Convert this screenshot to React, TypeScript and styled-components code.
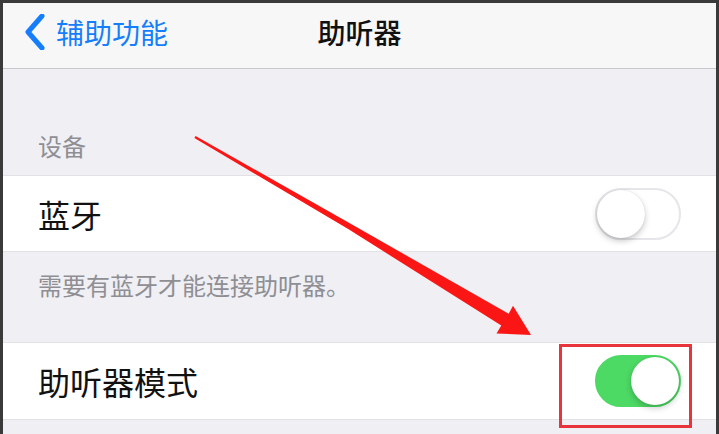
import React from "react";
import styled, { createGlobalStyle } from "styled-components";

const GlobalStyle = createGlobalStyle`
  html, body {
    margin: 0;
    padding: 0;
    background: #3a3a3a;
  }
  body {
    font-family: "Noto Sans CJK SC", "Noto Sans", sans-serif;
  }
`;

const Page = styled.div`
  position: relative;
  width: 719px;
  height: 434px;
  overflow: hidden;
  background: #3a3a3a;
`;

const Screen = styled.div`
  margin: 3px 3px 0 3px;
  height: 431px;
  background: #efeff4;
  display: flex;
  flex-direction: column;
`;

const NavBar = styled.div`
  box-sizing: border-box;
  height: 66px;
  padding-bottom: 8px;
  background: #f7f7f8;
  border-bottom: 1px solid #c8c7cc;
  display: grid;
  grid-template-columns: 1fr auto 1fr;
  align-items: center;
`;

const BackButton = styled.div`
  display: flex;
  align-items: center;
  gap: 10px;
  padding-left: 21px;
  color: #157efb;
  font-size: 28px;
  line-height: 36px;
`;

const Title = styled.div`
  font-size: 28px;
  line-height: 36px;
  font-weight: 500;
  color: #111;
`;

const SectionHeader = styled.div`
  padding: 65px 0 17px 35px;
  font-size: 24px;
  line-height: 24px;
  color: #8e8e93;
`;

const SectionFooter = styled.div`
  padding: 21px 0 45px 35px;
  font-size: 24px;
  line-height: 24px;
  color: #8e8e93;
`;

const Row = styled.div<{ $h: number }>`
  box-sizing: border-box;
  height: ${(p) => p.$h}px;
  background: #fff;
  border-top: 1px solid #e2e2e6;
  border-bottom: 1px solid #e2e2e6;
  display: flex;
  align-items: center;
  justify-content: space-between;
  padding: 0 35px;
`;

const Label = styled.span`
  font-size: 32px;
  line-height: 40px;
  color: #111;
`;

const Track = styled.div<{ $on: boolean }>`
  box-sizing: border-box;
  position: relative;
  width: 86px;
  height: 52px;
  border-radius: 26px;
  background: ${(p) => (p.$on ? "#4cd964" : "#fff")};
  border: 2px solid ${(p) => (p.$on ? "#4cd964" : "#e6e6ea")};
`;

const Knob = styled.div<{ $on: boolean }>`
  position: absolute;
  top: 0;
  left: ${(p) => (p.$on ? "34px" : "0")};
  width: 48px;
  height: 48px;
  border-radius: 50%;
  background: #fff;
  box-shadow: 0 3px 6px rgba(0, 0, 0, 0.22), 0 0 1px rgba(0, 0, 0, 0.15);
`;

const Overlay = styled.svg`
  position: absolute;
  left: 0;
  top: 0;
  pointer-events: none;
`;

function Toggle({ on }: { on: boolean }) {
  return (
    <Track $on={on}>
      <Knob $on={on} />
    </Track>
  );
}

export default function App() {
  return (
    <>
      <GlobalStyle />
      <Page>
        <Screen>
          <NavBar>
            <BackButton>
              <svg width="22" height="36" viewBox="0 0 22 36">
                <path
                  d="M18 2 L4 18 L18 34"
                  fill="none"
                  stroke="#157efb"
                  strokeWidth="5"
                  strokeLinecap="round"
                  strokeLinejoin="round"
                />
              </svg>
              辅助功能
            </BackButton>
            <Title>助听器</Title>
            <div />
          </NavBar>
          <SectionHeader>设备</SectionHeader>
          <Row $h={77}>
            <Label>蓝牙</Label>
            <Toggle on={false} />
          </Row>
          <SectionFooter>需要有蓝牙才能连接助听器。</SectionFooter>
          <Row $h={78}>
            <Label>助听器模式</Label>
            <Toggle on={true} />
          </Row>
        </Screen>
        <Overlay width="719" height="434" viewBox="0 0 719 434">
          {/* tapering annotation arrow */}
          <polygon
            points="195.6,136 352,224.5 508.7,313.8 513,305.8 531,335 496.5,333.5 501.3,325.4 349,229.6 194.4,138"
            fill="#fb1616"
          />
          <rect
            x="560.5"
            y="345.5"
            width="130"
            height="81"
            fill="none"
            stroke="#e8343b"
            strokeWidth="3"
          />
        </Overlay>
      </Page>
    </>
  );
}
